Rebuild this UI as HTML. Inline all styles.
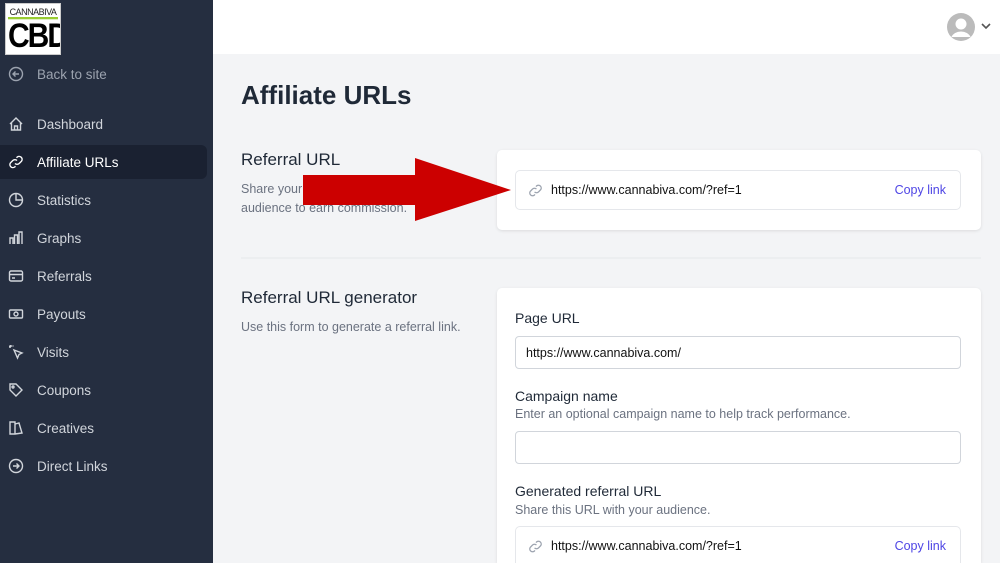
<!DOCTYPE html><html style="overflow:hidden;width:1000px;height:563px"><head><style>
*{margin:0;padding:0;box-sizing:border-box}
body{width:1000px;height:563px;overflow:hidden;font-family:"Liberation Sans",sans-serif;background:#f3f4f6;position:relative}
.sb{position:absolute;left:0;top:0;width:213px;height:563px;background:#252e40}
.logo{position:absolute;left:5px;top:3px;width:56px;height:52px;background:#fff;border:1px solid #ccc;overflow:hidden}
.logo .t{font-size:9px;color:#222;text-align:center;margin-top:3px;letter-spacing:-.5px}
.logo .b{font-size:30px;font-weight:bold;color:#000;text-align:center;line-height:30px;letter-spacing:-2px;border-top:2px solid #9c3;margin:0 2px;transform:scaleY(1.15);transform-origin:top}
.it{position:absolute;left:0;width:207px;height:34px;display:flex;align-items:center;color:#d1d5db;font-size:13.5px}
.it svg{margin-left:8px;margin-right:13px}
.act{background:#1a2131;border-radius:0 6px 6px 0;color:#fff}
.top{position:absolute;left:213px;top:0;right:0;height:54px;background:#fff}
h1{position:absolute;left:241px;top:80px;font-size:26px;font-weight:600;color:#1f2937}
.h2{position:absolute;left:241px;font-size:17px;color:#1f2937}
.p{position:absolute;left:241px;font-size:12.5px;color:#6b7280;line-height:19px}
.card{position:absolute;left:497px;width:484px;background:#fff;border-radius:5px;box-shadow:0 1px 3px rgba(0,0,0,.1)}
.url{position:absolute;left:515px;width:446px;height:40px;border:1px solid #e5e7eb;border-radius:5px;display:flex;align-items:center;font-size:12.5px;color:#111}
.url svg{margin:0 8px 0 12px}
.url .c{margin-left:auto;margin-right:14px;color:#4f46e5}
.lab{position:absolute;left:515px;font-size:14px;color:#1f2937}
.sub{position:absolute;left:515px;font-size:12.5px;color:#6b7280}
.in{position:absolute;left:515px;width:446px;height:33px;border:1px solid #d1d5db;border-radius:4px;font-size:12.5px;padding:9px 10px;color:#111}
</style></head><body>
<div class="sb">
<div class="logo"><div class="t">CANNABIVA</div><div class="b">CBD</div></div>
<div class="it" style="top:57px;color:#9ca3af"><svg width="16" height="16" viewBox="0 0 16 16" fill="none" stroke="#9ca3af" stroke-width="1.4"><circle cx="8" cy="8" r="6.5"/><path d="M11 8H5M7.5 5.5L5 8l2.5 2.5"/></svg>Back to site</div>
<div class="it" style="top:107px"><svg width="16" height="16" viewBox="0 0 16 16" fill="none" stroke="#d1d5db" stroke-width="1.4"><path d="M2 8L8 2l6 6M3.5 6.5V14h9V6.5M6.5 14v-4h3v4"/></svg>Dashboard</div>
<div class="it act" style="top:145px"><svg width="16" height="16" viewBox="0 0 16 16" fill="none" stroke="#fff" stroke-width="1.4"><path d="M7 9.5a3 3 0 0 0 4.2 0l2.3-2.3a3 3 0 0 0-4.2-4.2L8.5 3.8M9 6.5a3 3 0 0 0-4.2 0L2.5 8.8a3 3 0 0 0 4.2 4.2l.8-.8"/></svg>Affiliate URLs</div>
<div class="it" style="top:183px"><svg width="16" height="16" viewBox="0 0 16 16" fill="none" stroke="#d1d5db" stroke-width="1.4"><circle cx="8" cy="8" r="6.5"/><path d="M8 1.5V8h6.5"/></svg>Statistics</div>
<div class="it" style="top:221px"><svg width="16" height="16" viewBox="0 0 16 16" fill="none" stroke="#d1d5db" stroke-width="1.4"><path d="M2 14V8h3v6M6.5 14V5h3v9M11 14V2h3v12"/></svg>Graphs</div>
<div class="it" style="top:259px"><svg width="16" height="16" viewBox="0 0 16 16" fill="none" stroke="#d1d5db" stroke-width="1.4"><rect x="1.5" y="3" width="13" height="10" rx="1.5"/><path d="M1.5 6.5h13M4 10h3"/></svg>Referrals</div>
<div class="it" style="top:297px"><svg width="16" height="16" viewBox="0 0 16 16" fill="none" stroke="#d1d5db" stroke-width="1.4"><rect x="1.5" y="4" width="13" height="8" rx="1"/><circle cx="8" cy="8" r="2"/></svg>Payouts</div>
<div class="it" style="top:335px"><svg width="16" height="16" viewBox="0 0 16 16" fill="none" stroke="#d1d5db" stroke-width="1.4"><path d="M6 6l8 3-3 1.5L9.5 14zM3 1v2M1 3h2M1.5 1.5l1.5 1.5M5 1.5v1"/></svg>Visits</div>
<div class="it" style="top:373px"><svg width="16" height="16" viewBox="0 0 16 16" fill="none" stroke="#d1d5db" stroke-width="1.4"><path d="M2 2h6l6 6-6 6-6-6z"/><circle cx="5" cy="5" r="1"/></svg>Coupons</div>
<div class="it" style="top:411px"><svg width="16" height="16" viewBox="0 0 16 16" fill="none" stroke="#d1d5db" stroke-width="1.4"><path d="M2 2h5v12H2zM7 4l4-1 3 10-7 1"/></svg>Creatives</div>
<div class="it" style="top:449px"><svg width="16" height="16" viewBox="0 0 16 16" fill="none" stroke="#d1d5db" stroke-width="1.4"><circle cx="8" cy="8" r="6.5"/><path d="M5 8h6M8.5 5.5L11 8l-2.5 2.5"/></svg>Direct Links</div>
</div>
<div class="top"><svg style="position:absolute;left:733px;top:12px" width="30" height="30" viewBox="0 0 30 30"><circle cx="15" cy="15" r="14" fill="#bbb"/><circle cx="15" cy="12" r="5.5" fill="#fff"/><path d="M5.5 25a10 8 0 0 1 19 0" fill="#fff"/></svg><svg style="position:absolute;left:768px;top:23px" width="10" height="7"><path d="M1 1l4 4 4-4" stroke="#555" stroke-width="1.6" fill="none"/></svg></div>
<h1>Affiliate URLs</h1>
<div class="h2" style="top:150px">Referral URL</div>
<div class="p" style="top:180px">Share your referral URL with your<br>audience to earn commission.</div>
<div class="card" style="top:150px;height:80px"></div>
<div class="url" style="top:170px"><svg width="15" height="15" viewBox="0 0 16 16" fill="none" stroke="#9ca3af" stroke-width="1.4"><path d="M7 9.5a3 3 0 0 0 4.2 0l2.3-2.3a3 3 0 0 0-4.2-4.2L8.5 3.8M9 6.5a3 3 0 0 0-4.2 0L2.5 8.8a3 3 0 0 0 4.2 4.2l.8-.8"/></svg>https://www.cannabiva.com/?ref=1<span class="c">Copy link</span></div>
<svg style="position:absolute;left:0;top:0" width="1000" height="563"><polygon points="303,175 415,175 415,158 511,190 415,221 415,205 303,205" fill="#cc0000"/><line x1="241" y1="258" x2="981" y2="258" stroke="#e5e7eb"/></svg>
<div class="h2" style="top:288px">Referral URL generator</div>
<div class="p" style="top:318px">Use this form to generate a referral link.</div>
<div class="card" style="top:288px;height:275px;border-radius:5px 5px 0 0"></div>
<div class="lab" style="top:310px">Page URL</div>
<div class="in" style="top:336px">https://www.cannabiva.com/</div>
<div class="lab" style="top:388px">Campaign name</div>
<div class="sub" style="top:407px">Enter an optional campaign name to help track performance.</div>
<div class="in" style="top:431px"></div>
<div class="lab" style="top:483px">Generated referral URL</div>
<div class="sub" style="top:503px">Share this URL with your audience.</div>
<div class="url" style="top:526px;height:37px;border-bottom:none;border-radius:5px 5px 0 0;align-items:flex-start;padding-top:12px"><svg width="15" height="15" viewBox="0 0 16 16" fill="none" stroke="#9ca3af" stroke-width="1.4"><path d="M7 9.5a3 3 0 0 0 4.2 0l2.3-2.3a3 3 0 0 0-4.2-4.2L8.5 3.8M9 6.5a3 3 0 0 0-4.2 0L2.5 8.8a3 3 0 0 0 4.2 4.2l.8-.8"/></svg>https://www.cannabiva.com/?ref=1<span class="c">Copy link</span></div>
</body></html>
